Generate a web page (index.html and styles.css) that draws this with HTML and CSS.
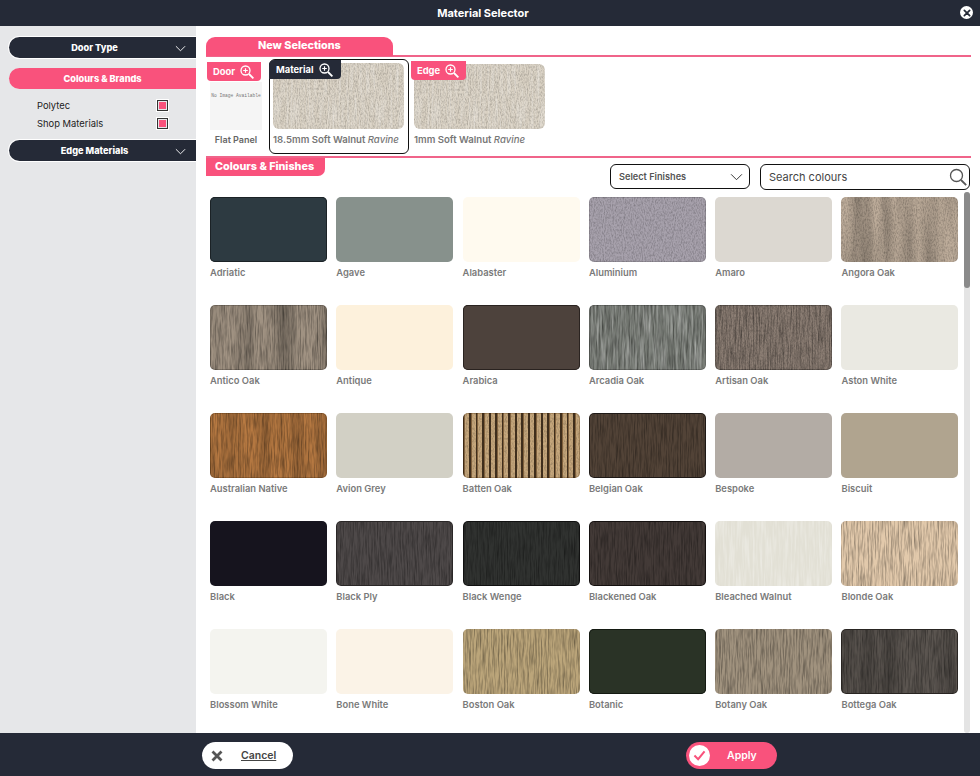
FILE: index.html
```html
<!DOCTYPE html>
<html lang="en">
<head>
<meta charset="utf-8">
<title>Material Selector</title>
<link rel="stylesheet" href="styles.css">
</head>
<body>
<div class="app">
  <header class="topbar">
    <h1 class="topbar-title">Material Selector</h1>
    <button class="close-btn" aria-label="Close"><svg viewBox="0 0 12 12" width="8" height="8"><path d="M2 2l8 8M10 2l-8 8" stroke="#252a37" stroke-width="2.6" stroke-linecap="round"/></svg></button>
  </header>
  <div class="main">
    <aside class="sidebar">
      <div class="pill pill-dark"><span>Door Type</span><svg class="chev" viewBox="0 0 12 7" width="11" height="7"><path d="M1 1l5 5 5-5" fill="none" stroke="#fff" stroke-width="1"/></svg></div>
      <div class="pill pill-pink"><span>Colours &amp; Brands</span></div>
      <ul class="brands">
        <li class="brand"><span>Polytec</span><i class="check"></i></li>
        <li class="brand"><span>Shop Materials</span><i class="check"></i></li>
      </ul>
      <div class="pill pill-dark"><span>Edge Materials</span><svg class="chev" viewBox="0 0 12 7" width="11" height="7"><path d="M1 1l5 5 5-5" fill="none" stroke="#fff" stroke-width="1"/></svg></div>
    </aside>
    <section class="content">
      <div class="section-head"><h2 class="tab tab-new">New Selections</h2></div>
      <div class="selections">
        <div class="sel sel-door">
          <div class="tag">Door<svg class="zoom-ic" viewBox="0 0 14 14" width="14" height="14"><circle cx="5.5" cy="5.5" r="4.5" fill="none" stroke="#fff" stroke-width="1.3"/><path d="M9 9l4.4 4.4" stroke="#fff" stroke-width="1.8"/><path d="M3.2 5.5h4.6M5.5 3.2v4.6" stroke="#fff" stroke-width="1.2"/></svg></div>
          <div class="noimg">No Image Available</div>
          <div class="door-name">Flat Panel</div>
        </div>
        <div class="sel sel-material">
          <div class="tag tag-dark">Material<svg class="zoom-ic" viewBox="0 0 14 14" width="14" height="14"><circle cx="5.5" cy="5.5" r="4.5" fill="none" stroke="#fff" stroke-width="1.3"/><path d="M9 9l4.4 4.4" stroke="#fff" stroke-width="1.8"/><path d="M3.2 5.5h4.6M5.5 3.2v4.6" stroke="#fff" stroke-width="1.2"/></svg></div>
          <div class="sel-img t-ravine"></div>
          <div class="sel-name">18.5mm Soft Walnut <em>Ravine</em></div>
        </div>
        <div class="sel sel-edge">
          <div class="tag">Edge<svg class="zoom-ic" viewBox="0 0 14 14" width="14" height="14"><circle cx="5.5" cy="5.5" r="4.5" fill="none" stroke="#fff" stroke-width="1.3"/><path d="M9 9l4.4 4.4" stroke="#fff" stroke-width="1.8"/><path d="M3.2 5.5h4.6M5.5 3.2v4.6" stroke="#fff" stroke-width="1.2"/></svg></div>
          <div class="sel-img t-ravine"></div>
          <div class="sel-name">1mm Soft Walnut <em>Ravine</em></div>
        </div>
      </div>
      <div class="finishes-rule"><h2 class="tab tab-finishes">Colours &amp; Finishes</h2></div>
      <div class="filters">
        <div class="select"><span>Select Finishes</span><svg viewBox="0 0 12 7" width="13" height="8"><path d="M1 1l5 5 5-5" fill="none" stroke="#333" stroke-width="0.9"/></svg></div>
        <div class="search"><span>Search colours</span><svg viewBox="0 0 18 18" width="18" height="18"><circle cx="7.5" cy="7.5" r="6" fill="none" stroke="#555" stroke-width="1.3"/><path d="M12 12l5.2 5.2" stroke="#555" stroke-width="1.8"/></svg></div>
      </div>
      <div class="grid-wrap">
        <div class="grid">
          <div class="item"><div class="sw s-adriatic"></div><div class="lbl">Adriatic</div></div>
          <div class="item"><div class="sw s-agave"></div><div class="lbl">Agave</div></div>
          <div class="item"><div class="sw s-alabaster"></div><div class="lbl">Alabaster</div></div>
          <div class="item"><div class="sw s-aluminium"></div><div class="lbl">Aluminium</div></div>
          <div class="item"><div class="sw s-amaro"></div><div class="lbl">Amaro</div></div>
          <div class="item"><div class="sw s-angora"></div><div class="lbl">Angora Oak</div></div>

          <div class="item"><div class="sw s-antico"></div><div class="lbl">Antico Oak</div></div>
          <div class="item"><div class="sw s-antique"></div><div class="lbl">Antique</div></div>
          <div class="item"><div class="sw s-arabica"></div><div class="lbl">Arabica</div></div>
          <div class="item"><div class="sw s-arcadia"></div><div class="lbl">Arcadia Oak</div></div>
          <div class="item"><div class="sw s-artisan"></div><div class="lbl">Artisan Oak</div></div>
          <div class="item"><div class="sw s-aston"></div><div class="lbl">Aston White</div></div>

          <div class="item"><div class="sw s-australian"></div><div class="lbl">Australian Native</div></div>
          <div class="item"><div class="sw s-avion"></div><div class="lbl">Avion Grey</div></div>
          <div class="item"><div class="sw s-batten"></div><div class="lbl">Batten Oak</div></div>
          <div class="item"><div class="sw s-belgian"></div><div class="lbl">Belgian Oak</div></div>
          <div class="item"><div class="sw s-bespoke"></div><div class="lbl">Bespoke</div></div>
          <div class="item"><div class="sw s-biscuit"></div><div class="lbl">Biscuit</div></div>

          <div class="item"><div class="sw s-black"></div><div class="lbl">Black</div></div>
          <div class="item"><div class="sw s-blackply"></div><div class="lbl">Black Ply</div></div>
          <div class="item"><div class="sw s-wenge"></div><div class="lbl">Black Wenge</div></div>
          <div class="item"><div class="sw s-blackened"></div><div class="lbl">Blackened Oak</div></div>
          <div class="item"><div class="sw s-bleached"></div><div class="lbl">Bleached Walnut</div></div>
          <div class="item"><div class="sw s-blonde"></div><div class="lbl">Blonde Oak</div></div>

          <div class="item"><div class="sw s-blossom"></div><div class="lbl">Blossom White</div></div>
          <div class="item"><div class="sw s-bone"></div><div class="lbl">Bone White</div></div>
          <div class="item"><div class="sw s-boston"></div><div class="lbl">Boston Oak</div></div>
          <div class="item"><div class="sw s-botanic"></div><div class="lbl">Botanic</div></div>
          <div class="item"><div class="sw s-botany"></div><div class="lbl">Botany Oak</div></div>
          <div class="item"><div class="sw s-bottega"></div><div class="lbl">Bottega Oak</div></div>
        </div>
        <div class="scrollbar"><div class="thumb"></div></div>
      </div>
    </section>
  </div>
  <footer class="bottombar">
    <button class="btn btn-cancel"><svg viewBox="0 0 12 12" width="12" height="12"><path d="M1.5 1.5l9 9M10.5 1.5l-9 9" stroke="#555" stroke-width="2.8"/></svg><span>Cancel</span></button>
    <button class="btn btn-apply"><span class="tick"><svg viewBox="0 0 14 12" width="13" height="11"><path d="M1.5 6l4 4 7-8.5" fill="none" stroke="#f9527c" stroke-width="2.2"/></svg></span><span>Apply</span></button>
  </footer>
</div>
</body>
</html>
```
FILE: styles.css
```css
:root {
  --dark: #252a37;
  --pink: #f9527c;
  --g-wood: url("data:image/svg+xml,%3Csvg xmlns='http://www.w3.org/2000/svg' width='500' height='260'%3E%3Cfilter id='f' x='0' y='0' width='100%25' height='100%25'%3E%3CfeTurbulence type='fractalNoise' baseFrequency='0.7 0.05' numOctaves='3' seed='4'/%3E%3CfeColorMatrix values='0 0 0 0 0 0 0 0 0 0 0 0 0 0 0 0 0 0 0.75 -0.28'/%3E%3C/filter%3E%3Crect width='500' height='260' filter='url(%23f)'/%3E%3C/svg%3E");
  --g-band: url("data:image/svg+xml,%3Csvg xmlns='http://www.w3.org/2000/svg' width='500' height='260'%3E%3Cfilter id='f' x='0' y='0' width='100%25' height='100%25'%3E%3CfeTurbulence type='fractalNoise' baseFrequency='0.05 0.005' numOctaves='3' seed='21'/%3E%3CfeColorMatrix values='0 0 0 0 0 0 0 0 0 0 0 0 0 0 0 0 0 0 0.6 -0.22'/%3E%3C/filter%3E%3Crect width='500' height='260' filter='url(%23f)'/%3E%3C/svg%3E");
  --g-fine: url("data:image/svg+xml,%3Csvg xmlns='http://www.w3.org/2000/svg' width='500' height='260'%3E%3Cfilter id='f' x='0' y='0' width='100%25' height='100%25'%3E%3CfeTurbulence type='fractalNoise' baseFrequency='0.9 0.4' numOctaves='2' seed='9'/%3E%3CfeColorMatrix values='0 0 0 0 0 0 0 0 0 0 0 0 0 0 0 0 0 0 0.45 -0.17'/%3E%3C/filter%3E%3Crect width='500' height='260' filter='url(%23f)'/%3E%3C/svg%3E");
  --g-light: url("data:image/svg+xml,%3Csvg xmlns='http://www.w3.org/2000/svg' width='500' height='260'%3E%3Cfilter id='f' x='0' y='0' width='100%25' height='100%25'%3E%3CfeTurbulence type='fractalNoise' baseFrequency='0.5 0.03' numOctaves='3' seed='12'/%3E%3CfeColorMatrix values='0 0 0 0 1 0 0 0 0 1 0 0 0 0 1 0 0 0 0.7 -0.27'/%3E%3C/filter%3E%3Crect width='500' height='260' filter='url(%23f)'/%3E%3C/svg%3E");
}

* { box-sizing: border-box; }

html, body { height: 100%; }

body {
  margin: 0;
  overflow: hidden;
  font-family: Inter, "Open Sans", "Liberation Sans", sans-serif;
  color: #333;
  background: #fff;
}

button { font-family: inherit; border: 0; padding: 0; cursor: pointer; }

.app {
  display: flex;
  flex-direction: column;
  width: 980px;
  height: 776px;
}

/* top bar */
.topbar {
  position: relative;
  flex: 0 0 26px;
  display: flex;
  align-items: center;
  justify-content: center;
  padding-right: 14px;
  background: var(--dark);
}
.topbar-title {
  margin: 0;
  font-size: 11px;
  font-weight: 700;
  color: #fff;
}
.close-btn {
  position: absolute;
  top: 6px;
  right: 7px;
  width: 13px;
  height: 13px;
  border-radius: 50%;
  background: #fff;
  display: flex;
  align-items: center;
  justify-content: center;
}

.main { flex: 1; display: flex; min-height: 0; }

/* sidebar */
.sidebar {
  flex: 0 0 196px;
  background: #e6e7e9;
  padding: 11px 0 0 9px;
  display: flex;
  flex-direction: column;
}
.pill {
  position: relative;
  height: 21px;
  border-radius: 11px 0 0 11px;
  display: flex;
  align-items: center;
  color: #fff;
  font-size: 9.2px;
  font-weight: 800;
}
.pill-dark {
  background: var(--dark);
  padding-right: 16px;
  justify-content: center;
  box-shadow: 0 0 0 1px #fff;
}
.pill-pink {
  margin-top: 10px;
  background: var(--pink);
  justify-content: center;
}
.chev { position: absolute; right: 10px; top: 8px; }
.brands {
  list-style: none;
  margin: 0;
  padding: 7px 0 8px 28px;
}
.brand {
  height: 18px;
  width: 131px;
  display: flex;
  align-items: center;
  justify-content: space-between;
  font-size: 9.4px;
  color: #222;
}
.check {
  width: 11px;
  height: 11px;
  padding: 1px;
  border: 1.5px solid #333;
  background: var(--pink) content-box;
  box-shadow: 0 0 0 1px #fff;
}

/* content */
.content {
  flex: 1;
  min-width: 0;
  padding: 11px 0 0 10px;
  display: flex;
  flex-direction: column;
}
.section-head {
  height: 20px;
  border-bottom: 2px solid #f0648a;
  margin-right: 9px;
}
.tab {
  margin: 0;
  background: var(--pink);
  color: #fff;
  font-size: 10.8px;
  font-weight: 800;
}
.tab-new {
  width: 187px;
  height: 19px;
  border-radius: 9px 9px 0 0;
  padding-left: 52px;
  line-height: 17px;
}
.selections {
  display: flex;
  height: 99px;
  align-items: flex-start;
}
.sel { position: relative; }
.tag {
  position: absolute;
  display: flex;
  align-items: center;
  gap: 5px;
  height: 19px;
  background: var(--pink);
  color: #fff;
  font-size: 9.4px;
  font-weight: 700;
  padding-left: 6px;
  border-radius: 0 0 4px 4px;
  z-index: 1;
}
.tag-dark { background: var(--dark); }
.sel-door { width: 60px; margin: 4px 0 0 1px; }
.sel-door .tag { left: 0; top: 1px; width: 54px; }
.noimg {
  margin: 21px 0 0 3px;
  width: 52px;
  height: 48px;
  background: #f5f5f5;
  font-family: "Liberation Mono", monospace;
  font-size: 4.6px;
  color: #777;
  text-align: center;
  padding-top: 11px;
  white-space: nowrap;
}
.door-name {
  margin-top: 4px;
  margin-left: 3px;
  width: 52px;
  text-align: center;
  font-size: 9px;
  font-weight: 600;
  color: #666;
}
.sel-material {
  width: 140px;
  height: 95px;
  margin: 2px 0 0 2px;
  border: 1px solid #111;
  border-radius: 6px;
  padding: 3px 3px 0;
  background: #fff;
}
.sel-material .tag { left: -1px; top: 0; width: 72px; padding-left: 7px; border-radius: 5px 0 4px 0; }
.sel-img {
  width: 131px;
  height: 66px;
  border-radius: 6px;
}
.sel-name {
  margin-top: 5px;
  font-size: 9.6px;
  font-weight: 600;
  color: #777;
  white-space: nowrap;
}
.sel-edge { width: 140px; margin: 4px 0 0 2px; }
.sel-edge .tag { left: 0; top: 0; width: 55px; }
.sel-edge .sel-img { margin: 3px 0 0 3px; height: 65px; }
.sel-edge .sel-name { margin: 5px 0 0 3px; }
.sel-name em { font-weight: 500; }

.finishes-rule {
  height: 20px;
  margin-right: 9px;
  border-top: 2px solid #f0648a;
}
.tab-finishes {
  width: 119px;
  height: 18px;
  border-radius: 0 0 7px 0;
  padding-left: 9px;
  line-height: 17px;
  white-space: nowrap;
}
.filters {
  display: flex;
  justify-content: flex-end;
  gap: 10px;
  height: 27px;
  margin-top: -12px;
  padding-right: 10px;
  position: relative;
}
.select {
  width: 140px;
  height: 25px;
  border: 1px solid #111;
  border-radius: 6px;
  display: flex;
  align-items: center;
  justify-content: space-between;
  padding: 0 6px 0 8px;
  font-size: 9.2px;
  font-weight: 600;
  color: #555;
}
.search {
  width: 210px;
  height: 26px;
  border: 1px solid #111;
  border-radius: 6px;
  display: flex;
  align-items: center;
  justify-content: space-between;
  padding: 0 2px 0 8px;
  font-size: 11px;
  color: #444;
}

.grid-wrap {
  position: relative;
  flex: 1;
  min-height: 0;
  margin-top: 1px;
  overflow: hidden;
}
.grid {
  display: grid;
  grid-template-columns: repeat(6, 117px);
  column-gap: 9.3px;
  grid-auto-rows: 108px;
  padding: 5px 0 0 4px;
}
.lbl {
  margin-top: 5px;
  font-size: 9.4px;
  font-weight: 600;
  color: #7a7a7a;
  white-space: nowrap;
}
.sw {
  width: 117px;
  height: 65px;
  border-radius: 5px;
}
.scrollbar {
  position: absolute;
  top: 0;
  right: 10px;
  width: 6px;
  height: 100%;
  background: #e4e4e4;
  border-radius: 3px;
}
.thumb {
  height: 96px;
  background: #8a8a8a;
  border-radius: 3px;
}

/* textures */
.t-ravine { background-color: #d9d1c3; background-image: var(--g-light), var(--g-fine); }
.s-adriatic { background: #2d3a41; box-shadow: inset 0 0 0 1px #1b2226; }
.s-agave { background: #87918c; }
.s-alabaster { background: #fffaef; }
.s-aluminium { background-color: #a7a1ac; background-image: var(--g-fine); background-position: -40px -30px; box-shadow: inset 0 0 0 1px rgba(0,0,0,.12); }
.s-amaro { background: #dcd8d1; }
.s-angora { background-color: #bdac9a; background-image: var(--g-fine), var(--g-band); background-position: -160px -60px, -90px 0; }
.s-antico { background-color: #a09282; background-image: var(--g-wood), var(--g-band); background-position: -120px -20px, -200px -50px; box-shadow: inset 0 0 0 1px rgba(0,0,0,.2); }
.s-antique { background: #fdf1dc; }
.s-arabica { background: #4d423c; box-shadow: inset 0 0 0 1px #2a2320; }
.s-arcadia { background-color: #737771; background-image: var(--g-light), var(--g-wood); background-position: -60px -100px, -240px -10px; box-shadow: inset 0 0 0 1px rgba(0,0,0,.2); }
.s-artisan { background-color: #8c7e74; background-image: var(--g-wood), var(--g-fine); background-position: -300px -80px, 0 0; box-shadow: inset 0 0 0 1px rgba(0,0,0,.25); }
.s-aston { background: #eae9e2; }
.s-australian { background-color: #b87a42; background-image: var(--g-wood), var(--g-band); background-position: -350px -140px, -300px -120px; box-shadow: inset 0 0 0 1px rgba(60,30,0,.25); }
.s-avion { background: #d2d0c5; }
.s-batten {
  background-color: #c6a77c;
  background-image: repeating-linear-gradient(90deg, #3f2e1c 0 1.5px, #80613d 1.5px 2.5px, transparent 2.5px 6.5px), var(--g-fine);
  box-shadow: inset 0 0 0 1px rgba(60,30,0,.25);
}
.s-belgian { background-color: #524337; background-image: var(--g-wood); background-position: -220px -170px; box-shadow: inset 0 0 0 1px #1f1a17; }
.s-bespoke { background: #b3aca5; }
.s-biscuit { background: #b0a48f; }
.s-black { background: #16141e; }
.s-blackply { background-color: #4e4949; background-image: var(--g-wood); background-position: -30px -190px; box-shadow: inset 0 0 0 1px #2a2727; }
.s-wenge { background-color: #303230; background-image: var(--g-wood); background-position: -380px -60px; box-shadow: inset 0 0 0 1px #111; }
.s-blackened { background-color: #433a37; background-image: var(--g-wood); background-position: -260px -110px; box-shadow: inset 0 0 0 1px #151110; }
.s-bleached { background-color: #e2e0d5; background-image: var(--g-light); background-position: -200px -150px; }
.s-blonde { background-color: #e2c9ab; background-image: var(--g-wood); background-position: -100px -150px; }
.s-blossom { background: #f4f4ef; }
.s-bone { background: #fbf3e7; }
.s-boston { background-color: #bba57a; background-image: var(--g-wood); background-position: -340px -40px; }
.s-botanic { background: #2a3326; box-shadow: inset 0 0 0 1px #141a12; }
.s-botany { background-color: #a0927e; background-image: var(--g-wood); background-position: -150px -90px; }
.s-bottega { background-color: #5b5550; background-image: var(--g-wood), var(--g-band); background-position: -70px -130px, -130px -40px; box-shadow: inset 0 0 0 1px #292522; }

/* footer */
.bottombar {
  position: relative;
  flex: 0 0 43px;
  background: var(--dark);
}
.btn {
  position: absolute;
  top: 9px;
  height: 27px;
  width: 91px;
  border-radius: 14px;
  display: flex;
  align-items: center;
  font-size: 10.5px;
  font-weight: 600;
}
.btn-cancel {
  left: 202px;
  background: #fff;
  color: #444;
  padding-left: 9px;
  gap: 18px;
}
.btn-cancel span { text-decoration: underline; }
.btn-apply {
  left: 686px;
  background: var(--pink);
  color: #fff;
  padding-left: 3px;
  gap: 17px;
}
.tick {
  width: 21px;
  height: 21px;
  border-radius: 50%;
  background: #fff;
  display: flex;
  align-items: center;
  justify-content: center;
}
```
